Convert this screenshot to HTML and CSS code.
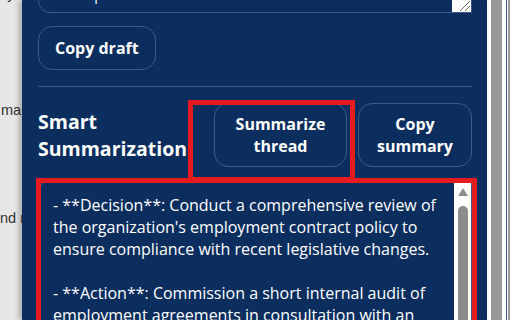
FILE: index.html
```html
<!DOCTYPE html>
<html lang="en">
<head>
    <meta charset="UTF-8">
    <meta name="viewport" content="width=device-width, initial-scale=1.0">
    <title>Smart Summarization</title>
    <link rel="stylesheet" href="styles.css">
</head>
<body>

    <div class="host">
        <p class="host-top">ly</p>
        <p class="host-mid">mail</p>
        <p class="host-low">nd re</p>
    </div>

    <div class="panel">

        <div class="draft">
            <textarea class="draft-text">Thanks for flagging the contract issue.
We'll update the team soon.</textarea>
            <div class="draft-bar">
                <svg class="grip" width="12" height="12" viewBox="0 0 12 12">
                    <path d="M1 11 L11 1 M6 11 L11 6" stroke="#6f6f6f" stroke-width="1" fill="none"/>
                </svg>
            </div>
        </div>

        <button class="btn btn-draft">Copy draft</button>

        <hr class="divider">

        <div class="section">
            <h2>Smart Summarization</h2>
            <button class="btn btn-sum">Summarize thread</button>
            <button class="btn btn-copy">Copy summary</button>
        </div>

        <div class="summary-wrap">
            <div class="summary">
                <div class="summary-text">- **Decision**: Conduct a comprehensive review of the organization's employment contract policy to ensure compliance with recent legislative changes.

- **Action**: Commission a short internal audit of employment agreements in consultation with an external legal advisor and report back to the board.</div>
                <div class="vbar">
                    <span class="vbar-up"></span>
                    <span class="vbar-thumb"></span>
                </div>
            </div>
        </div>

    </div>

    <div class="gutter">
        <span class="bar-a"></span>
        <span class="bar-gap"></span>
        <span class="bar-line"></span>
        <span class="bar-gap thin"></span>
        <span class="bar-b"></span>
    </div>

</body>
</html>
```

FILE: styles.css
```css
* {
    box-sizing: border-box;
}

html, body {
    margin: 0;
    height: 320px;
    overflow: hidden;
}

body {
    display: flex;
    background: #e6e6e6;
    font-family: "Open Sans", "Noto Sans", sans-serif;
}

/* page behind the sidebar */
.host {
    width: 22px;
    flex: none;
    overflow: hidden;
    color: #333;
    font: 14.5px/20px "Liberation Sans", Arial, sans-serif;
    white-space: nowrap;
}

.host p {
    margin: 0;
}

.host-top {
    margin-top: -16px !important;
    padding-left: 4px;
}

.host-mid {
    margin-top: 96px !important;
    padding-left: 1px;
}

.host-low {
    margin-top: 88px !important;
}

/* sidebar */
.panel {
    width: 465px;
    flex: none;
    padding: 0 15px 0 16px;
    background: #0b2e5e;
    color: #fff;
    box-shadow: -3px 0 5px rgba(0, 0, 0, 0.25);
    position: relative;
    z-index: 1;
}

.draft {
    display: flex;
    height: 59px;
    margin-top: -46px;
    border: 1px solid #3d5a87;
    border-radius: 12px 12px 0 12px;
    overflow: hidden;
}

.draft-text {
    flex: 1;
    padding: 10px 12px;
    border: 0;
    background: transparent;
    color: #fff;
    font: 14px/20px "Open Sans", sans-serif;
    resize: none;
    overflow: hidden;
}

.draft-bar {
    width: 19px;
    display: flex;
    align-items: flex-end;
    justify-content: flex-end;
    background: #fff;
}

.grip {
    display: block;
}

.btn {
    background: transparent;
    color: #fff;
    border: 1px solid #3d5a87;
    border-radius: 14px;
    font: 700 16px/22px "Open Sans", sans-serif;
    text-align: center;
}

.btn-draft {
    display: block;
    height: 44px;
    margin-top: 13px;
    padding: 0 16px;
}

.divider {
    margin: 16px 0;
    border: 0;
    border-top: 1px solid #3a5784;
}

.section {
    display: flex;
    align-items: center;
    gap: 11px;
}

.section h2 {
    flex: 1;
    margin: 0;
    font-size: 19.5px;
    line-height: 27px;
    font-weight: 700;
}

.btn-sum {
    width: 133px;
    height: 64px;
    padding: 0 20px;
    position: relative;
}

.btn-copy {
    width: 114px;
    height: 64px;
    padding: 0 14px;
}

/* red review marks */
.btn-sum::after,
.summary-wrap::after {
    content: "";
    position: absolute;
    border: 5px solid #e51b1f;
    pointer-events: none;
}

.btn-sum::after {
    left: -27px;
    right: -9px;
    top: -4px;
    bottom: -16px;
}

.summary-wrap {
    position: relative;
    margin-top: 13px;
}

.summary-wrap::after {
    left: -2px;
    right: -5px;
    top: -2px;
    bottom: -2px;
}

.summary {
    display: flex;
    height: 220px;
    border: 1px solid #3d5a87;
    border-radius: 12px 0 0 12px;
    overflow: hidden;
}

.summary-text {
    flex: 1;
    padding: 13px 14px;
    overflow: hidden;
    font-size: 16px;
    line-height: 22px;
    white-space: pre-wrap;
}

.vbar {
    width: 17px;
    display: flex;
    flex-direction: column;
    align-items: center;
    background: #fff;
}

.vbar-up {
    width: 0;
    height: 0;
    margin-top: 7px;
    border: 5px solid transparent;
    border-top: 0;
    border-bottom: 8px solid #8c8c8c;
}

.vbar-thumb {
    flex: 1;
    width: 10px;
    margin-top: 10px;
    background: #8c8c8c;
    border-radius: 5px 5px 0 0;
}

/* window scrollbars on the right */
.gutter {
    flex: 1;
    display: flex;
    padding-left: 4px;
    background: #fdfdfd;
}

.bar-a {
    width: 11px;
    background: #999;
}

.bar-gap {
    width: 4px;
    background: #fdfdfd;
}

.bar-gap.thin {
    width: 1px;
}

.bar-line {
    width: 1px;
    background: #3b5a8a;
}

.bar-b {
    width: 2px;
    background: #999;
}
```
